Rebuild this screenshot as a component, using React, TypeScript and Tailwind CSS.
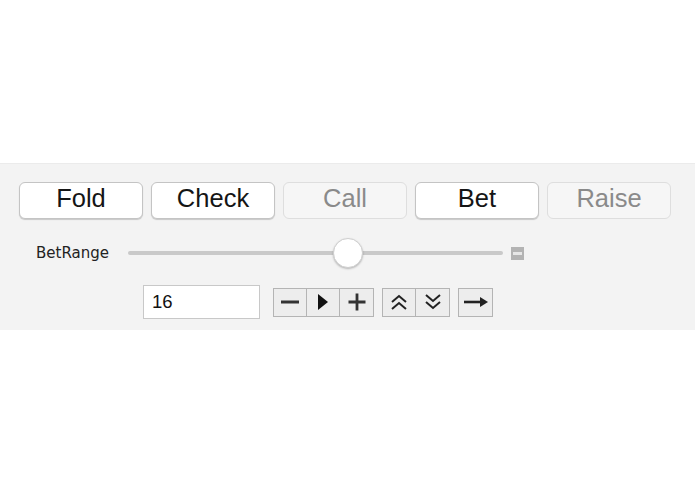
import React from 'react';

const ACTIONS = [
  { label: 'Fold', enabled: true },
  { label: 'Check', enabled: true },
  { label: 'Call', enabled: false },
  { label: 'Bet', enabled: true },
  { label: 'Raise', enabled: false },
];

function StepButton({ children, last }: { children: React.ReactNode; last?: boolean }) {
  return (
    <button
      className={`w-[33px] h-full flex items-center justify-center bg-[#ededed] text-[#222] ${last ? '' : 'border-r border-[#b4b4b4]'}`}
    >
      {children}
    </button>
  );
}

export default function App() {
  return (
    <div className="w-[695px] h-[494px] bg-white flex flex-col" style={{ fontFamily: '"Liberation Sans", Arial, sans-serif' }}>
      <div className="h-[163px]" />
      <div className="h-[167px] bg-[#f3f3f3] border-t border-[#ebebeb] px-[19px] pt-[18px]">
        {/* action buttons */}
        <div className="flex gap-[8px]">
          {ACTIONS.map((a) => (
            <button
              key={a.label}
              className={`w-[124px] h-[37px] rounded-[6px] text-[25.5px] leading-none flex items-center justify-center pb-[3px] ${
                a.enabled
                  ? 'bg-white text-[#151515] border border-[#c4c4c4] shadow-[0_1px_1px_rgba(0,0,0,0.18)]'
                  : 'bg-[#f6f6f6] text-[#8a8a8a] border border-[#dedede]'
              }`}
            >
              {a.label}
            </button>
          ))}
        </div>

        {/* bet range slider */}
        <div className="flex items-center h-[30px] mt-[19px] pl-[17px]">
          <span className="w-[92px] text-[15px] text-[#222] font-['DejaVu_Sans',sans-serif]">BetRange</span>
          <div className="relative w-[375px] h-[4px] rounded-full bg-[#c9c9c9]">
            <div className="absolute left-[205px] top-[-13px] w-[30px] h-[30px] rounded-full bg-white border border-[#cfcfcf] shadow-[0_1px_2px_rgba(0,0,0,0.25)]" />
          </div>
          <div className="ml-[8px] w-[13px] h-[13px] bg-[#b3b3b3] flex items-center justify-center">
            <div className="w-[9px] h-[3px] bg-[#e6e6e6]" />
          </div>
        </div>

        {/* value + steppers */}
        <div className="flex items-center mt-[17px] pl-[124px]">
          <div className="w-[117px] h-[34px] bg-white border border-[#c8c8c8] flex items-center pl-[8px] text-[18.5px] text-[#111]">
            16
          </div>
          <div className="ml-[13px] h-[29px] flex border border-[#b4b4b4]">
            <StepButton>
              <svg width="20" height="20" viewBox="0 0 20 20">
                <path d="M1 10h18" stroke="#333" strokeWidth="3" />
              </svg>
            </StepButton>
            <StepButton>
              <svg width="20" height="20" viewBox="0 0 20 20">
                <path d="M5 2L15 10L5 18Z" fill="#111" />
              </svg>
            </StepButton>
            <StepButton last>
              <svg width="20" height="20" viewBox="0 0 20 20">
                <path d="M1.5 10h17M10 1.5v17" stroke="#333" strokeWidth="2.8" />
              </svg>
            </StepButton>
          </div>
          <div className="ml-[8px] h-[29px] flex border border-[#b4b4b4]">
            <StepButton>
              <svg width="18" height="18" viewBox="0 0 18 18">
                <path d="M2 9L9 3L16 9M2 16L9 10L16 16" stroke="#222" strokeWidth="2" fill="none" />
              </svg>
            </StepButton>
            <StepButton last>
              <svg width="18" height="18" viewBox="0 0 18 18">
                <path d="M2 2L9 8L16 2M2 9L9 15L16 9" stroke="#222" strokeWidth="2" fill="none" />
              </svg>
            </StepButton>
          </div>
          <div className="ml-[8px] h-[29px] flex border border-[#b4b4b4]">
            <StepButton last>
              <svg width="26" height="16" viewBox="0 0 26 16">
                <path d="M1 8h17" stroke="#222" strokeWidth="2.6" />
                <path d="M17 3L25 8L17 13Z" fill="#222" />
              </svg>
            </StepButton>
          </div>
        </div>
      </div>
    </div>
  );
}
